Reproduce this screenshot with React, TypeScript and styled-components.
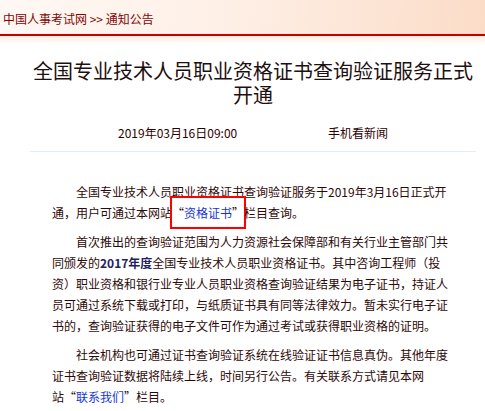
import React from 'react';
import styled, { createGlobalStyle } from 'styled-components';

const GlobalStyle = createGlobalStyle`
    html, body {
        margin: 0;
        padding: 0;
        background: #fff;
    }
    body {
        font-family: "Noto Sans CJK SC", "Liberation Sans", sans-serif;
    }
`;

const Page = styled.div`
    width: 485px;
    min-height: 411px;
    overflow: hidden;
`;

const TopBar = styled.div`
    height: 36px;
    padding: 2px 0 0 3px;
    box-sizing: border-box;
    line-height: 34px;
    font-size: 12px;
    color: #820505;
    background: linear-gradient(100deg, #fff8f4 0%, #fef0e7 45%, #fbdcc7 100%);
    border-bottom: 2px solid #c40000;
    white-space: nowrap;
`;

const Fade = styled.div`
    height: 8px;
    background: linear-gradient(to bottom, #fcebe0 0%, #ffffff 100%);
`;

const Article = styled.div`
    margin: 0 9px 0 30px;
`;

const Title = styled.h1`
    margin: 15px 0 0;
    font-size: 20px;
    font-weight: normal;
    line-height: 24px;
    text-align: center;
    color: #1e1010;
`;

const Meta = styled.div`
    display: flex;
    padding: 16px 0 8px 88px;
    line-height: 20px;
    font-size: 12px;
    color: #300000;
    border-bottom: 1px solid #e3eef6;
    .date {
        width: 210px;
    }
`;

const Body = styled.div`
    padding: 29px 24px 0 22px;
    font-size: 12px;
    line-height: 21px;
    color: #2e0808;
    p {
        margin: 0 0 8px;
        text-indent: 2em;
    }
`;

const Link = styled.a`
    color: #1536d8;
    text-decoration: none;
`;

const Keep = styled.span`
    white-space: nowrap;
`;

const Marked = styled.span`
    border: 2px solid #ff0000;
    padding: 6px 0;
    margin: 0 -2px;
`;

const Strong = styled.b`
    color: #24205e;
`;

const App = () => (
    <Page>
        <GlobalStyle />
        <TopBar>中国人事考试网 &gt;&gt; 通知公告</TopBar>
        <Fade />
        <Article>
            <Title>全国专业技术人员职业资格证书查询验证服务正式开通</Title>
            <Meta>
                <span className="date">2019年03月16日09:00</span>
                <span>手机看新闻</span>
            </Meta>
            <Body>
                <p>
                    全国专业技术人员职业资格证书查询验证服务于2019年3月16日正式开通，用户可通过本网站
                    <Marked>“<Link href="#">资格证书</Link>”</Marked>栏目查询。
                </p>
                <p>
                    首次推出的查询验证范围为人力资源社会保障部和有关行业主管部门共同颁发的<Strong>2017年度</Strong>全国专业技术人员职业资格证书。其中咨询工程师（投资）职业资格和银行业专业人员职业资格查询验证结果为电子证书，持证人员可通过系统下载或打印，与纸质证书具有同等法律效力。暂未实行电子证书的，查询验证获得的电子文件可作为通过考试或获得职业资格的证明。
                </p>
                <p>
                    社会机构也可通过证书查询验证系统在线验证证书信息真伪。其他年度证书查询验证数据将陆续上线，时间另行公告。有关联系方式请见本网
                    <Keep>站“<Link href="#">联系我们</Link>”</Keep>栏目。
                </p>
            </Body>
        </Article>
    </Page>
);

export default App;
